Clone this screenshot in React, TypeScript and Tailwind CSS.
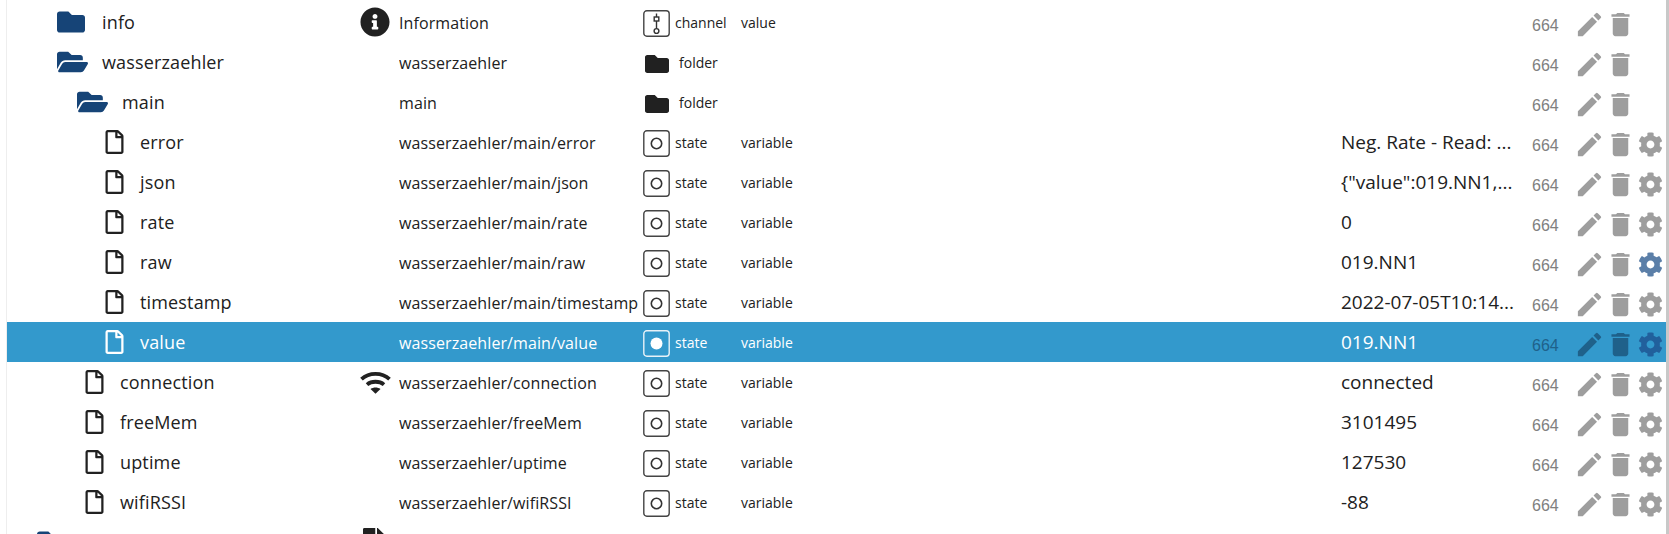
import { FaFolder, FaFolderOpen, FaRegFile, FaFile, FaInfoCircle, FaCog } from "react-icons/fa";
import { MdEdit, MdDelete } from "react-icons/md";

type Row = { name: string; indent: number; icon: "folder" | "open" | "file"; title: string; type: "channel" | "folder" | "state"; role: string; value: string; gear?: boolean; special?: "info" | "wifi"; sel?: boolean; active?: boolean };

const s = (name: string, indent: number, id: string, value: string, extra: Partial<Row> = {}): Row => ({ name, indent, icon: "file", title: id, type: "state", role: "variable", value, gear: true, ...extra });

const rows: Row[] = [
  { name: "info", indent: 57, icon: "folder", title: "Information", type: "channel", role: "value", value: "", special: "info" },
  { name: "wasserzaehler", indent: 57, icon: "open", title: "wasserzaehler", type: "folder", role: "", value: "" },
  { name: "main", indent: 77, icon: "open", title: "main", type: "folder", role: "", value: "" },
  s("error", 105, "wasserzaehler/main/error", "Neg. Rate - Read: ..."),
  s("json", 105, "wasserzaehler/main/json", '{"value":019.NN1,...'),
  s("rate", 105, "wasserzaehler/main/rate", "0"),
  s("raw", 105, "wasserzaehler/main/raw", "019.NN1", { active: true }),
  s("timestamp", 105, "wasserzaehler/main/timestamp", "2022-07-05T10:14..."),
  s("value", 105, "wasserzaehler/main/value", "019.NN1", { sel: true }),
  s("connection", 85, "wasserzaehler/connection", "connected", { special: "wifi" }),
  s("freeMem", 85, "wasserzaehler/freeMem", "3101495"),
  s("uptime", 85, "wasserzaehler/uptime", "127530"),
  s("wifiRSSI", 85, "wasserzaehler/wifiRSSI", "-88"),
];

function WifiIcon() {
  return (
    <svg viewBox="0 0 31 23" className="h-[23px] w-[31px]" fill="none" stroke="#212121" strokeWidth="3.8">
      <path d="M1.5 8.2 C9 1.2 22 1.2 29.5 8.2" />
      <path d="M7 13.6 C11.5 9.8 19.5 9.8 24 13.6" />
      <path d="M10.5 18 L15.5 22.8 L20.5 18 C17.5 16 13.5 16 10.5 18 Z" fill="#212121" stroke="none" />
    </svg>
  );
}

function TypeIcon({ type, sel }: { type: string; sel?: boolean }) {
  if (type === "folder") return <FaFolder className="ml-[2px] mt-[3px] h-[24px] w-[24px] text-[#212121]" />;
  const c = sel ? "#ffffff" : "#333333";
  return (
    <svg viewBox="0 0 27 27" className="mt-[3px] h-[27px] w-[27px]" fill="none">
      <rect x="0.8" y="0.8" width="25.4" height="25.4" rx="3" stroke={sel ? "#e8f2f8" : "#444444"} strokeWidth="1.4" />
      {type === "channel" ? (
        <g stroke={c} strokeWidth="1.4">
          <path d="M13.5 3.5v15" />
          <rect x="11.2" y="7" width="4.6" height="4" fill="#fff" />
          <circle cx="13.5" cy="21" r="2.4" />
        </g>
      ) : sel ? (
        <circle cx="13.5" cy="13.5" r="6" fill="#fff" />
      ) : (
        <circle cx="13.5" cy="13.5" r="5.2" stroke={c} strokeWidth="1.6" />
      )}
    </svg>
  );
}

function TreeRow({ r }: { r: Row }) {
  const text = r.sel ? "text-white" : "text-[#212121]";
  const actionDim = r.sel ? "text-[#1f618a]" : "text-[#9e9e9e]";
  return (
    <div className={`flex h-10 shrink-0 items-center ${r.sel ? "bg-[#3399cc]" : ""} ${text}`}>
      <div className="flex w-[353px] shrink-0 items-center" style={{ paddingLeft: r.indent - 7 }}>
        <div className={`flex shrink-0 items-center ${r.icon === "file" ? "w-[35px]" : "w-[45px]"}`}>
          {r.icon === "folder" && <FaFolder className="h-[28px] w-[28px] text-[#164477]" />}
          {r.icon === "open" && <FaFolderOpen className="h-[28px] w-[31px] text-[#164477]" />}
          {r.icon === "file" && <FaRegFile className={`h-[24px] w-[19px] ${r.sel ? "text-white" : "text-[#212121]"}`} />}
        </div>
        <span className="mt-[1px] text-[18px] tracking-[0.15px]">{r.name}</span>
      </div>
      <div className="flex w-[39px] shrink-0 items-center justify-start">
        {r.special === "info" && <FaInfoCircle className="h-[30px] w-[30px] text-[#212121]" />}
        {r.special === "wifi" && <WifiIcon />}
      </div>
      <div className="mt-[1px] w-[244px] shrink-0 truncate text-[16px] tracking-[0.1px]">{r.title}</div>
      <div className="flex w-[98px] shrink-0 items-center gap-[5px]">
        <TypeIcon type={r.type} sel={r.sel} />
        <span className={`text-[14px] ${r.type === "folder" ? "ml-[5px]" : ""}`}>{r.type}</span>
      </div>
      <div className="w-[600px] shrink-0 text-[14px]">{r.role}</div>
      <div className="mt-[1px] w-[191px] shrink-0 truncate text-[19px]">{r.value}</div>
      <div className={`mt-[7px] w-[42px] shrink-0 text-[16px] ${r.sel ? "text-[#1f618a]" : "text-[#808080]"}`} style={{ fontFamily: "'Liberation Sans', sans-serif" }}>664</div>
      <div className={`mt-[5px] flex items-center ${actionDim}`}>
        <MdEdit className="h-[31px] w-[31px]" />
        <MdDelete className="h-[31px] w-[31px]" />
        {r.gear && <FaCog className={`ml-[2px] h-[25px] w-[25px] ${r.active ? "text-[#5b7fa8]" : r.sel ? "text-[#21609c]" : ""}`} />}
      </div>
    </div>
  );
}

export default function App() {
  return (
    <div className="h-[534px] overflow-hidden bg-white" style={{ fontFamily: "'Open Sans', 'Noto Sans', sans-serif" }}>
      <div className="flex h-full">
        <div className="w-[7px] shrink-0 border-r border-[#eeeeee]" />
        <div className="flex min-w-0 flex-1 flex-col pt-[2px]">
          {rows.map((r) => <TreeRow key={r.name} r={r} />)}
          <div className="flex h-10 shrink-0 items-center">
            <FaFolder className="ml-[30px] h-[28px] w-[28px] text-[#164477]" />
            <FaFile className="ml-[298px] h-[28px] w-[21px] text-[#212121]" />
            <FaFolder className="ml-[261px] mt-[3px] h-[24px] w-[24px] text-[#212121]" />
          </div>
        </div>
        <div className="w-[3px] shrink-0 bg-[#c8c8c8]" />
      </div>
    </div>
  );
}
